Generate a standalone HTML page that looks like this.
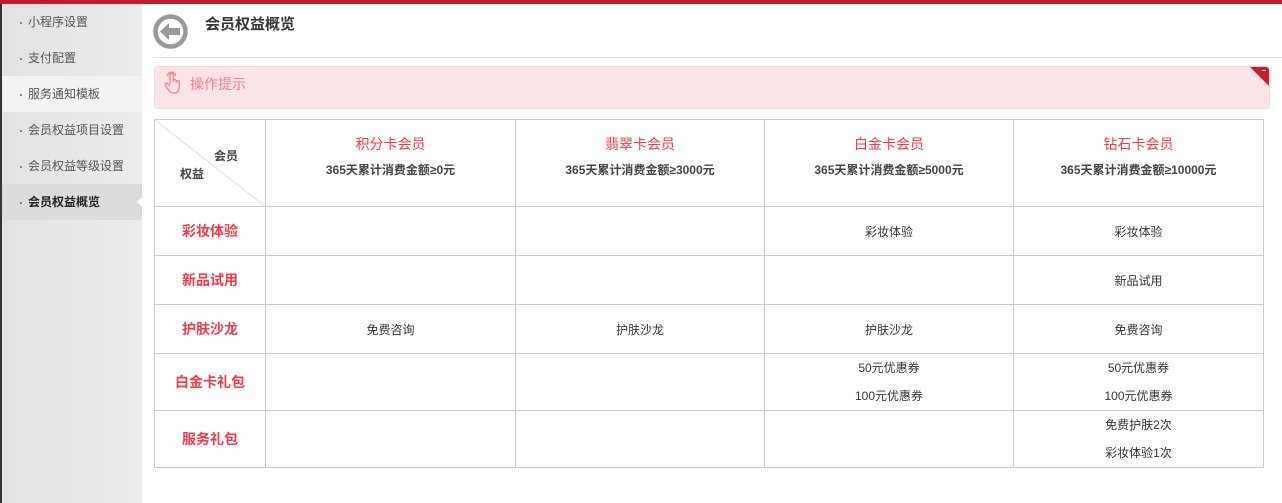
<!DOCTYPE html>
<html><head><meta charset="utf-8"><style>
*{margin:0;padding:0;box-sizing:border-box}
body{width:1282px;height:503px;overflow:hidden;background:#fff;font-family:"Liberation Sans","Noto Sans CJK SC",sans-serif;font-size:12px;color:#333;position:relative}
.top{position:absolute;left:0;top:0;width:1282px;height:4px;background:#c81a2e}
.side{position:absolute;left:0;top:4px;width:142px;height:499px;background:linear-gradient(90deg,#e2e2e2,#ececec);border-left:2px solid #333}
.side div{height:36px;line-height:36px;padding-left:26px;color:#555;font-size:12px;position:relative}
.side div:before{content:"";position:absolute;left:18px;top:18px;width:2px;height:2px;background:#888}
.side .l{background:#f3f3f3}
.side .a{background:#dcdcdc;color:#222;font-weight:bold}
.side .a:after{content:"";position:absolute;right:0;top:13px;border:5px solid transparent;border-right-color:#fff}
.back{position:absolute;left:153px;top:14px}
.title{position:absolute;left:205px;top:13px;font-size:15px;font-weight:bold;color:#333}
.hr{position:absolute;left:153px;top:57px;width:1129px;height:1px;background:#e2e2e2}
.tip{position:absolute;left:154px;top:66px;width:1116px;height:43px;background:#fde5e7;border:1px solid #f9d3d7;border-radius:4px;overflow:hidden}
.tip span{position:absolute;left:35px;top:7px;font-size:14px;color:#f47f8c}
.tip .c{position:absolute;right:0;top:0;width:0;height:0;border-top:19px solid #c81a2e;border-left:19px solid transparent}
.tip .m{position:absolute;right:3px;top:3px;width:4px;height:1px;background:#fff}
table{position:absolute;left:154px;top:119px;border-collapse:collapse;table-layout:fixed}
td{border:1px solid #ccc;text-align:center;font-size:12px;color:#333}
.r{color:#f0394b;font-size:14px;font-weight:bold}
.h{vertical-align:top;padding-top:14px}
.h b{display:block;color:#f0394b;font-size:14px;font-weight:normal;margin-bottom:7px}
.h i{font-style:normal;font-weight:bold;color:#444}
.two{line-height:28px}
</style></head><body>
<div class="top"></div>
<div class="side">
<div>小程序设置</div><div>支付配置</div><div class="l">服务通知模板</div><div>会员权益项目设置</div><div>会员权益等级设置</div><div class="a">会员权益概览</div>
</div>
<svg class="back" width="35" height="35" viewBox="0 0 35 35"><circle cx="17.5" cy="17.5" r="15" fill="none" stroke="#999" stroke-width="4.5"/><path d="M7 17.5 L16 9 V14 H27 V21 H16 V26 Z" fill="#999"/></svg>
<div class="title">会员权益概览</div>
<div class="hr"></div>
<div class="tip"><svg style="position:absolute;left:8px;top:4px" width="20" height="24" viewBox="0 0 20 24"><path d="M7 13 V4 a1.6 1.6 0 0 1 3.2 0 V11 M10.2 10 a1.5 1.5 0 0 1 3 0 V12 M13.2 11 a1.5 1.5 0 0 1 3 0 V16 c0 4-2 6-5 6 H10 c-2 0-3-1-4.5-3 L2.5 14.5 a1.4 1.4 0 0 1 2.2-1.7 L7 15 M4.5 5 a4 4 0 0 1 8 0" fill="none" stroke="#f47f8c" stroke-width="1.3"/></svg><span>操作提示</span><div class="c"></div><div class="m"></div></div>
<table>
<colgroup><col style="width:111px"><col style="width:250px"><col style="width:249px"><col style="width:249px"><col style="width:250px"></colgroup>
<tr style="height:87px"><td style="position:relative;padding:0"><svg style="position:absolute;left:0;top:0" width="111" height="87"><line x1="0" y1="0" x2="111" y2="87" stroke="#ddd"/></svg><span style="position:absolute;left:59px;top:27px;font-weight:bold;color:#444">会员</span><span style="position:absolute;left:25px;top:45px;font-weight:bold;color:#444">权益</span></td>
<td class="h"><b>积分卡会员</b><i>365天累计消费金额≥0元</i></td>
<td class="h"><b>翡翠卡会员</b><i>365天累计消费金额≥3000元</i></td>
<td class="h"><b>白金卡会员</b><i>365天累计消费金额≥5000元</i></td>
<td class="h"><b>钻石卡会员</b><i>365天累计消费金额≥10000元</i></td></tr>
<tr style="height:49px"><td class="r">彩妆体验</td><td></td><td></td><td>彩妆体验</td><td>彩妆体验</td></tr>
<tr style="height:49px"><td class="r">新品试用</td><td></td><td></td><td></td><td>新品试用</td></tr>
<tr style="height:49px"><td class="r">护肤沙龙</td><td>免费咨询</td><td>护肤沙龙</td><td>护肤沙龙</td><td>免费咨询</td></tr>
<tr style="height:57px"><td class="r">白金卡礼包</td><td></td><td></td><td class="two">50元优惠券<br>100元优惠券</td><td class="two">50元优惠券<br>100元优惠券</td></tr>
<tr style="height:57px"><td class="r">服务礼包</td><td></td><td></td><td></td><td class="two">免费护肤2次<br>彩妆体验1次</td></tr>
</table>
</body></html>
